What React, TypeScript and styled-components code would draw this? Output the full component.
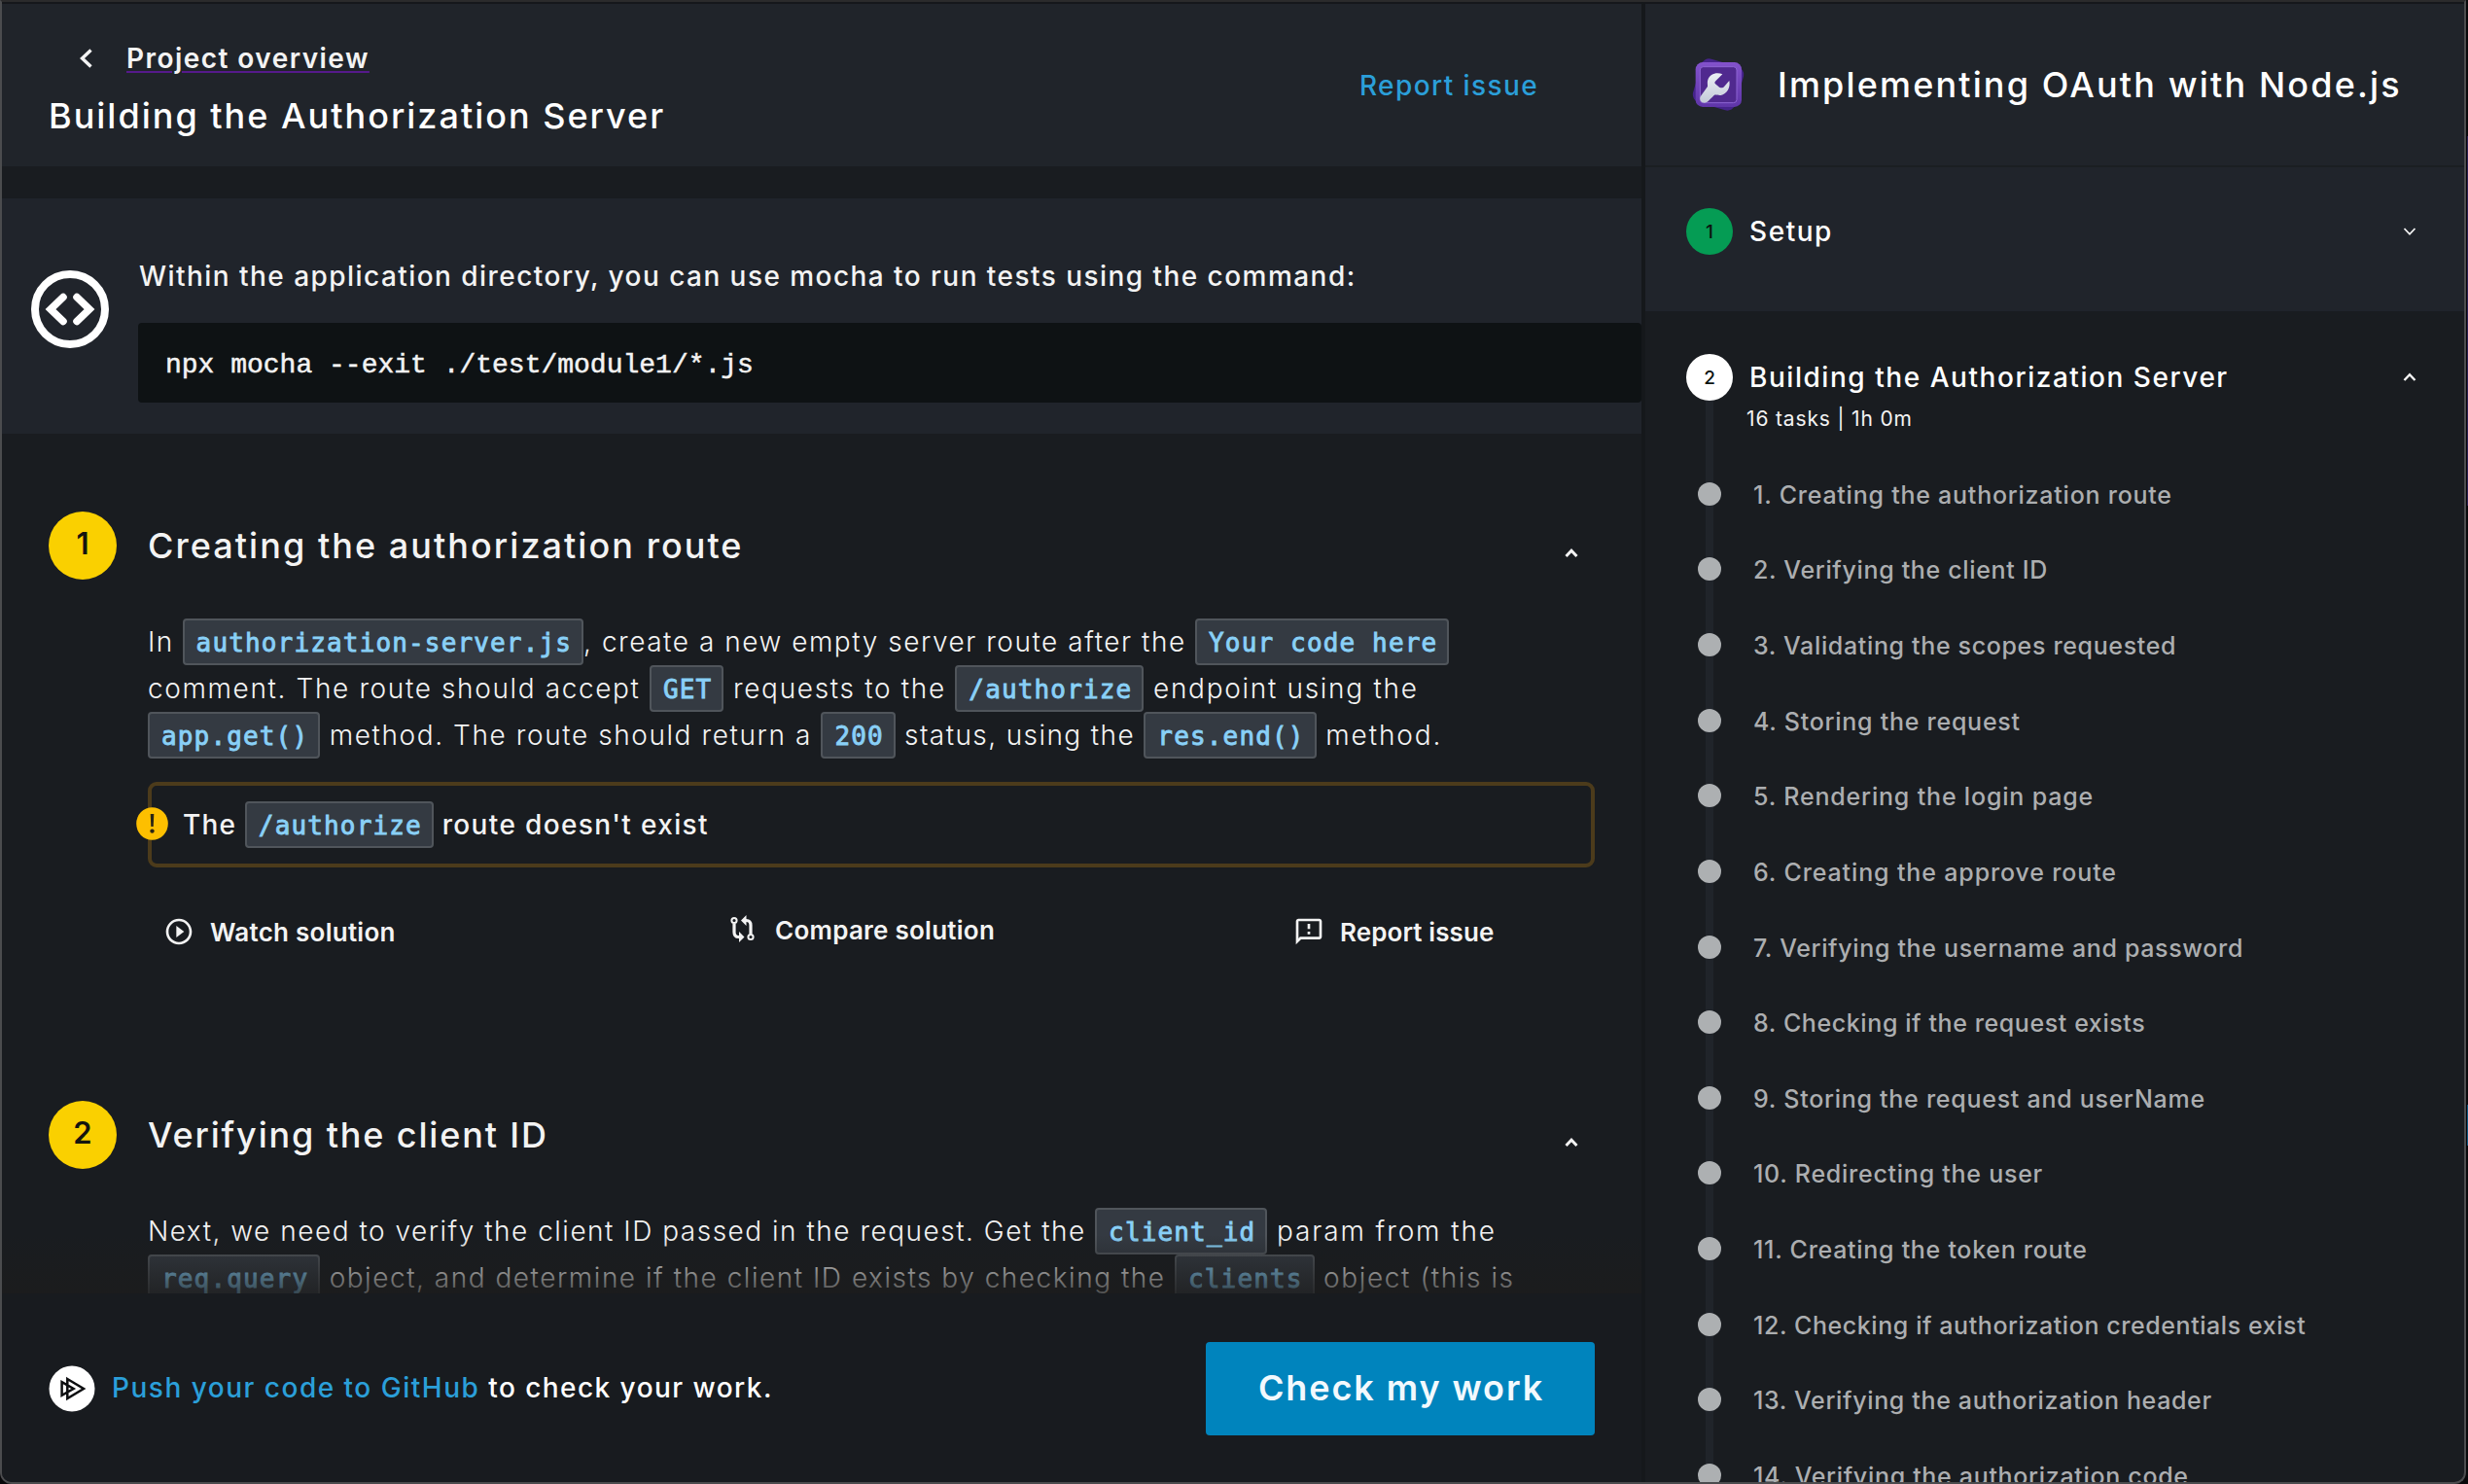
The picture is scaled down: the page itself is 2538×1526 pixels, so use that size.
import React from "react";
import styled, { createGlobalStyle } from "styled-components";

const GlobalStyle = createGlobalStyle`
  * { box-sizing: border-box; }
  body {
    margin: 0;
    background: #0b0b0d;
    font-family: Inter, "Liberation Sans", sans-serif;
    color: #f3f3f3;
  }
`;

const Page = styled.div`
  width: 2538px;
  height: 1526px;
  padding-right: 1px;
  overflow: hidden;
  background:
    linear-gradient(#2b1f52, #2b1f52) 2537px 140px / 1px 380px no-repeat,
    linear-gradient(#0a557f, #0a557f) 2537px 1136px / 1px 42px no-repeat,
    #08080a;
`;

const Frame = styled.div`
  display: flex;
  width: 2536px;
  height: 1526px;
  overflow: hidden;
  border: 2px solid #4b4c4e;
  border-top-color: #2b2b2c;
  border-radius: 0 0 12px 12px;
  background: #191c20;
`;

const Main = styled.main`
  display: flex;
  flex-direction: column;
  width: 1686px;
  height: 100%;
  border-top: 2px solid #15171b;
`;

const Sidebar = styled.aside`
  flex: 1;
  height: 100%;
  overflow: hidden;
  border-top: 2px solid #15171b;
  border-left: 4px solid #15181b;
`;

const Text = styled.span<{ $size?: number; $weight?: number; $track?: number; $color?: string }>`
  font-size: ${(p) => p.$size ?? 28}px;
  font-weight: ${(p) => p.$weight ?? 500};
  letter-spacing: ${(p) => p.$track ?? 1.5}px;
  color: ${(p) => p.$color ?? "#f3f3f3"};
  white-space: pre;
`;

const Header = styled.header`
  display: flex;
  justify-content: space-between;
  height: 167px;
  padding: 35px 106px 0 48px;
  background: #20242a;
`;

const BackLink = styled.div`
  display: flex;
  align-items: center;
  height: 40px;
  padding: 1px 0 0 32px;
  gap: 35px;
  margin-bottom: 18px;
`;

const BackText = styled(Text)`
  line-height: 40px;
  text-decoration: underline;
  text-decoration-color: #551a8b;
  text-decoration-thickness: 2px;
  text-underline-offset: 3px;
`;

const PageTitle = styled(Text)`
  display: block;
  line-height: 44px;
`;

const HeaderLink = styled(Text)`
  line-height: 40px;
  padding-top: 29px;
`;

const TestPanel = styled.section`
  display: flex;
  height: 242px;
  margin-top: 33px;
  background: #20242b;
`;

const PanelIcon = styled.div`
  width: 140px;
  padding: 74px 0 0 30px;
`;

const PanelBody = styled.div`
  flex: 1;
  padding-top: 60px;
`;

const PanelText = styled(Text)`
  display: block;
  padding-left: 1px;
  line-height: 40px;
`;

const Command = styled.pre`
  height: 82px;
  margin: 28px 0 0;
  padding-left: 28px;
  border-radius: 4px;
  background: #0e1214;
  font: 400 28px/87px "Liberation Mono", monospace;
  -webkit-text-stroke: 0.5px #f3f3f3;
  color: #f3f3f3;
`;

const Scroll = styled.div`
  position: relative;
  flex: 1;
  min-height: 0;
  overflow: hidden;
`;

const Fade = styled.div`
  position: absolute;
  left: 0;
  right: 0;
  bottom: 0;
  height: 60px;
  background: linear-gradient(rgba(28, 28, 28, 0), rgba(28, 28, 28, 0.75));
`;

const TaskSection = styled.section`
  height: 606px;
  padding: 80px 48px 0;
`;

const TaskHead = styled.div`
  display: flex;
  align-items: center;
  height: 70px;
`;

const TaskNumber = styled.div`
  width: 70px;
  height: 70px;
  margin-right: 32px;
  border-radius: 50%;
  background: #fad000;
  color: #14150f;
  font-size: 31px;
  font-weight: 600;
  line-height: 66px;
  text-align: center;
`;

const TaskTitle = styled(Text)`
  flex: 1;
  line-height: 44px;
`;

const HeadChevron = styled.div`
  display: flex;
  padding: 15px 17px 0 0;
`;

const TaskBody = styled.div`
  padding: 40px 0 0 102px;
`;

const Line = styled.div`
  display: flex;
  height: 48px;
  line-height: 48px;
`;

const Chip = styled.code`
  height: 48px;
  padding: 0 10px 0 12px;
  border: 2px solid #50555b;
  border-radius: 4px;
  background: #343a42;
  font: 400 26px/46px "DejaVu Sans Mono", monospace;
  letter-spacing: 1.15px;
  -webkit-text-stroke: 0.9px #89d0f7;
  color: #89d0f7;
  white-space: pre;
`;

const Alert = styled.div`
  position: relative;
  display: flex;
  align-items: center;
  height: 88px;
  margin-top: 24px;
  padding-left: 32px;
  border: 4px solid #4c3b1b;
  border-radius: 9px;
  line-height: 48px;
`;

const AlertBadge = styled.div`
  position: absolute;
  left: -16px;
  top: 22px;
  display: flex;
  width: 33px;
  height: 34px;
`;

const Actions = styled.div`
  display: grid;
  grid-template-columns: 581px 581px 1fr;
  height: 34px;
  margin: 49px 0 0 16px;
`;

const Action = styled.div<{ $lift?: number }>`
  display: flex;
  gap: 16px;
  align-items: center;
  height: 34px;
  margin-top: ${(p) => -(p.$lift ?? 0)}px;
`;

const Footer = styled.footer`
  display: flex;
  align-items: center;
  height: 194px;
  padding: 2px 48px 0 48px;
  background: #181b1f;
`;

const FooterText = styled.div`
  flex: 1;
  padding: 2px 0 0 17px;
  line-height: 40px;
`;

const CheckButton = styled.button`
  width: 400px;
  height: 96px;
  padding: 0 0 2px 2px;
  border: 0;
  border-radius: 4px;
  background: #0084bd;
  color: #f2f9fd;
  font: 600 36px/1 Inter, sans-serif;
  letter-spacing: 1.9px;
`;

const SideHeader = styled.div`
  display: flex;
  align-items: center;
  height: 168px;
  padding-left: 38px;
  gap: 22px;
  border-bottom: 2px solid #1b1f22;
  background: #20242a;
`;

const BadgeSlot = styled.div`
  display: flex;
  margin-top: -8px;
`;

const Module = styled.div<{ $open?: boolean }>`
  height: ${(p) => (p.$open ? 92 : 148)}px;
  padding: ${(p) => (p.$open ? 44 : 42)}px 49px 0 42px;
  background: ${(p) => (p.$open ? "#191c20" : "#20242b")};
`;

const ModuleRow = styled.div`
  display: flex;
  align-items: center;
  height: 48px;
`;

const ModuleNumber = styled.div<{ $bg: string }>`
  width: 48px;
  height: 48px;
  margin-right: 17px;
  border-radius: 50%;
  background: ${(p) => p.$bg};
  color: #0c1310;
  font-size: 19px;
  font-weight: 500;
  line-height: 49px;
  text-align: center;
`;

const ModuleTitle = styled(Text)`
  flex: 1;
  line-height: 48px;
`;

const Rail = styled.div`
  background: linear-gradient(#20242a, #20242a) 62px 0 / 8px 100% no-repeat;
`;

const ModuleMeta = styled.div`
  height: 57px;
  padding: 7px 0 0 104px;
  line-height: 24px;
`;

const TaskItem = styled.div`
  display: flex;
  align-items: center;
  height: 77.63px;
  padding-left: 54px;
`;

const Dot = styled.div`
  width: 24px;
  height: 24px;
  margin-right: 33px;
  border-radius: 50%;
  background: #adb0b2;
`;

const ItemText = styled(Text)`
  padding-top: 2px;
`;

const Chevron = ({ dir, w = 2.2 }: { dir: "up" | "down"; w?: number }) => (
  <svg width="14" height="10" viewBox="0 0 14 10">
    <path
      d={dir === "up" ? "M1.5 8 L7 2.2 L12.5 8" : "M1.5 2 L7 7.8 L12.5 2"}
      fill="none"
      stroke="#f3f3f3"
      strokeWidth={w}
    />
  </svg>
);

const BackArrow = () => (
  <svg width="13" height="20" viewBox="0 0 13 20">
    <path d="M11.5 1.5 L2.5 10 L11.5 18.5" fill="none" stroke="#f3f3f3" strokeWidth="3.4" />
  </svg>
);

const CodeIcon = () => (
  <svg width="80" height="80" viewBox="0 0 80 80" fill="none" stroke="#fff">
    <circle cx="40" cy="40" r="36" strokeWidth="8" />
    <path d="M33 27.5 L20 40 L33 52.5 M47 27.5 L60 40 L47 52.5" strokeWidth="7.5" strokeLinecap="round" />
  </svg>
);

const PlayIcon = () => (
  <svg width="32" height="32" viewBox="0 0 24 24" fill="#f3f3f3">
    <path d="M10 16.5l6-4.5-6-4.5v9zM12 2C6.48 2 2 6.48 2 12s4.48 10 10 10 10-4.48 10-10S17.52 2 12 2zm0 18c-4.41 0-8-3.59-8-8s3.59-8 8-8 8 3.59 8 8-3.59 8-8 8z" />
  </svg>
);

const CompareIcon = () => (
  <svg width="32" height="32" viewBox="0 0 32 32" fill="none" stroke="#f3f3f3">
    <circle cx="6" cy="6.5" r="2.6" strokeWidth="2" />
    <circle cx="23" cy="23.5" r="2.6" strokeWidth="2" />
    <path d="M6 9.5V18.5Q6 23.5 10.5 23.5H11.5 M23 20.5V11.5Q23 6.5 18.5 6.5H17.5" strokeWidth="3.2" />
    <path d="M11 18L16.5 23.5L11 29z M18.5 1L13 6.5L18.5 12z" fill="#f3f3f3" stroke="none" />
  </svg>
);

const FeedbackIcon = () => (
  <svg width="32" height="32" viewBox="0 0 24 24" fill="#f3f3f3">
    <path d="M20 2H4c-1.1 0-1.99.9-1.99 2L2 22l4-4h14c1.1 0 2-.9 2-2V4c0-1.1-.9-2-2-2zm0 14H5.17l-.59.59-.58.58V4h16v12zm-9-4h2v2h-2zm0-6h2v4h-2z" />
  </svg>
);

const WarningIcon = () => (
  <svg width="33" height="34" viewBox="0 0 33 34">
    <ellipse cx="16.5" cy="17" rx="16.3" ry="16.8" fill="#fdbf00" />
    <path d="M14.7 7h3.6l-.6 13h-2.4z" fill="#2b2614" />
    <circle cx="16.5" cy="24.6" r="2.2" fill="#2b2614" />
  </svg>
);

const BrandIcon = () => (
  <svg width="48" height="48" viewBox="0 0 48 48">
    <circle cx="24" cy="24" r="23.5" fill="#fff" />
    <path
      d="M19.3 14L36 24L19.3 34z M13.6 17.2L25.6 24L13.6 30.8z"
      fill="none"
      stroke="#0d0e10"
      strokeWidth="2.5"
    />
  </svg>
);

const WrenchBadge = () => (
  <svg width="76" height="76" viewBox="0 0 228 228">
    <defs>
      <linearGradient id="rim" x1="0" y1="0" x2="0" y2="1">
        <stop offset="0" stopColor="#8352cc" />
        <stop offset="1" stopColor="#5f35a8" />
      </linearGradient>
      <linearGradient id="steel" x1="0" y1="0" x2="0" y2="1">
        <stop offset="0" stopColor="#eceff5" />
        <stop offset="1" stopColor="#c3cad8" />
      </linearGradient>
    </defs>
    <rect x="43" y="56" width="136" height="140" rx="26" fill="#45238a" transform="rotate(16 111 126)" />
    <rect x="41" y="57" width="142" height="138" rx="22" fill="url(#rim)" />
    <rect x="55" y="71" width="113" height="111" rx="10" fill="#50298f" stroke="#8d64d2" strokeWidth="3" />
    <path
      d="M124 94C106 85 84 94 79 111C76 120 79 127 78 132L57 161C49 174 62 187 76 180C82 176 91 166 98 159C103 156 109 160 119 159C138 155 149 136 145 114L130 131C125 137 117 137 111 131L102 124C99 121 100 118 103 115Z"
      fill="url(#steel)"
    />
  </svg>
);

type Part = { code: string } | { text: string; track: number };

const Copy = ({ parts }: { parts: Part[] }) => (
  <Line>
    {parts.map((p, i) =>
      "code" in p ? (
        <Chip key={i}>{p.code}</Chip>
      ) : (
        <Text key={i} $weight={300} $track={p.track}>{p.text}</Text>
      )
    )}
  </Line>
);

const t = (text: string, track: number) => ({ text, track });
const c = (code: string) => ({ code });

const firstTask: Part[][] = [
  [t("In ", 1.3), c("authorization-server.js"), t(", create a new empty server route after the ", 1.52), c("Your code here")],
  [t("comment. The route should accept ", 1.62), c("GET"), t(" requests to the ", 1.66), c("/authorize"), t(" endpoint using the", 1.7)],
  [c("app.get()"), t(" method. The route should return a ", 1.58), c("200"), t(" status, using the ", 1.4), c("res.end()"), t(" method.", 1.85)],
];

const secondTask: Part[][] = [
  [t("Next, we need to verify the client ID passed in the request. Get the ", 1.5), c("client_id"), t(" param from the", 1.88)],
  [c("req.query"), t(" object, and determine if the client ID exists by checking the ", 1.52), c("clients"), t(" object (this is", 1.6)],
];

const items: [string, number][] = [
  ["Creating the authorization route", 0.76],
  ["Verifying the client ID", 0.66],
  ["Validating the scopes requested", 0.65],
  ["Storing the request", 0.74],
  ["Rendering the login page", 0.82],
  ["Creating the approve route", 0.86],
  ["Verifying the username and password", 0.66],
  ["Checking if the request exists", 0.59],
  ["Storing the request and userName", 0.73],
  ["Redirecting the user", 0.74],
  ["Creating the token route", 0.71],
  ["Checking if authorization credentials exist", 0.57],
  ["Verifying the authorization header", 0.65],
  ["Verifying the authorization code", 0.68],
];

const TaskTop = ({ n, title, track }: { n: number; title: string; track: number }) => (
  <TaskHead>
    <TaskNumber>{n}</TaskNumber>
    <TaskTitle $size={36} $track={track}>{title}</TaskTitle>
    <HeadChevron><Chevron dir="up" w={3} /></HeadChevron>
  </TaskHead>
);

export default function App() {
  return (
    <Page>
      <GlobalStyle />
      <Frame>
        <Main>
          <Header>
            <div>
              <BackLink>
                <BackArrow />
                <BackText $weight={600} $track={1.45}>Project overview</BackText>
              </BackLink>
              <PageTitle $size={36} $track={2} $color="#fff">Building the Authorization Server</PageTitle>
            </div>
            <HeaderLink $track={1.4} $color="#2b9fd9">Report issue</HeaderLink>
          </Header>
          <TestPanel>
            <PanelIcon><CodeIcon /></PanelIcon>
            <PanelBody>
              <PanelText $track={1.45}>
                Within the application directory, you can use mocha to run tests using the command:
              </PanelText>
              <Command>npx mocha --exit ./test/module1/*.js</Command>
            </PanelBody>
          </TestPanel>
          <Scroll>
            <TaskSection>
              <TaskTop n={1} title="Creating the authorization route" track={2.05} />
              <TaskBody>
                {firstTask.map((parts, i) => <Copy key={i} parts={parts} />)}
                <Alert>
                  <AlertBadge><WarningIcon /></AlertBadge>
                  <Text $track={1.2}>The </Text>
                  <Chip>/authorize</Chip>
                  <Text $track={1.35}> route doesn't exist</Text>
                </Alert>
                <Actions>
                  <Action><PlayIcon /><Text $size={26} $weight={600} $track={0.25}>Watch solution</Text></Action>
                  <Action $lift={2}><CompareIcon /><Text $size={26} $weight={600} $track={0.25}>Compare solution</Text></Action>
                  <Action><FeedbackIcon /><Text $size={26} $weight={600} $track={0.1}>Report issue</Text></Action>
                </Actions>
              </TaskBody>
            </TaskSection>
            <TaskSection>
              <TaskTop n={2} title="Verifying the client ID" track={1.85} />
              <TaskBody>
                {secondTask.map((parts, i) => <Copy key={i} parts={parts} />)}
              </TaskBody>
            </TaskSection>
            <Fade />
          </Scroll>
          <Footer>
            <BrandIcon />
            <FooterText>
              <Text $track={1.5} $color="#2b9fd9">Push your code to GitHub</Text>
              <Text $track={1.45} $color="#fff"> to check your work.</Text>
            </FooterText>
            <CheckButton>Check my work</CheckButton>
          </Footer>
        </Main>
        <Sidebar>
          <SideHeader>
            <BadgeSlot><WrenchBadge /></BadgeSlot>
            <Text $size={36} $track={2.15} $color="#fff">Implementing OAuth with Node.js</Text>
          </SideHeader>
          <Module>
            <ModuleRow>
              <ModuleNumber $bg="#059c54">1</ModuleNumber>
              <ModuleTitle $track={1.55} $color="#fff">Setup</ModuleTitle>
              <Chevron dir="down" w={1.8} />
            </ModuleRow>
          </Module>
          <Module $open>
            <ModuleRow>
              <ModuleNumber $bg="#fff">2</ModuleNumber>
              <ModuleTitle $color="#fff" $track={1.54}>Building the Authorization Server</ModuleTitle>
              <Chevron dir="up" w={2.4} />
            </ModuleRow>
          </Module>
          <Rail>
            <ModuleMeta><Text $size={21} $weight={400} $track={0.85}>16 tasks | 1h 0m</Text></ModuleMeta>
            {items.map(([label, track], i) => (
              <TaskItem key={label}>
                <Dot />
                <ItemText $size={25} $track={track} $color="#acaeb0">{`${i + 1}. ${label}`}</ItemText>
              </TaskItem>
            ))}
          </Rail>
        </Sidebar>
      </Frame>
    </Page>
  );
}
